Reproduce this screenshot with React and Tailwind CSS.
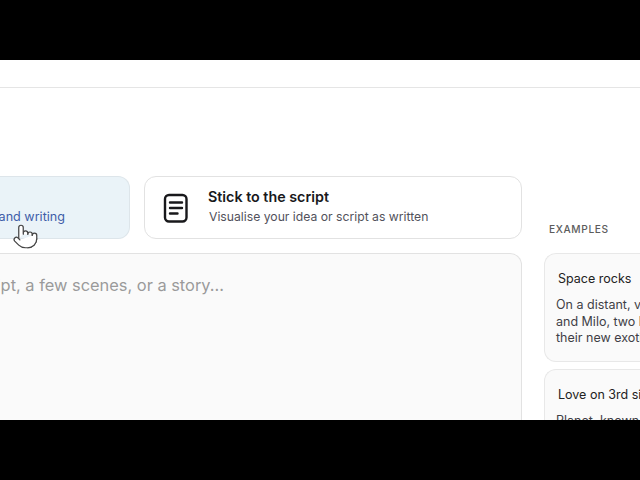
import { Pointer } from 'lucide-react'

function ScriptIcon() {
  return (
    <svg width="26" height="30" viewBox="0 0 26 30" fill="none" stroke="#18181b" strokeWidth="2.4" strokeLinecap="round" className="shrink-0">
      <rect x="2" y="2" width="21.5" height="26.5" rx="4" />
      <path d="M7 9.5h12M7 15h12M7 20.5h7.5" />
    </svg>
  )
}

function ExampleCard({ title, children }) {
  return (
    <div className="w-[130px] shrink-0 rounded-t-xl rounded-bl-xl border border-r-0 border-[#e8e8e8] bg-[#fafafa] pt-[15px] pb-[14px] pl-[11px] overflow-hidden">
      <div className="pl-[2px] text-[12.5px] leading-[20px] text-[#222] whitespace-nowrap">{title}</div>
      <div className="mt-[8px] text-[12.5px] leading-[16.5px] text-[#3f3f46] whitespace-nowrap">{children}</div>
    </div>
  )
}

export default function App() {
  return (
    <div className="w-[640px] h-[480px] flex flex-col bg-black overflow-hidden font-['Inter',sans-serif]">
      <div className="h-[60px] shrink-0" />
      <div className="h-[360px] shrink-0 bg-white overflow-hidden">
        <div className="h-[27px] border-b border-[#e5e5e5] box-content" />
        <div className="mt-[88px] flex">
          <div className="w-[522px] shrink-0">
            <div className="flex gap-[14px] h-[63px]">
              <div className="relative w-[130px] shrink-0 rounded-r-xl border border-l-0 border-[#dde5ea] bg-[#eaf3f8] flex items-end justify-end pr-[64px] pb-[13px]">
                <span className="text-[12.6px] leading-[16px] text-[#3f5ea8] whitespace-nowrap">and writing</span>
                <Pointer size={27} strokeWidth={1.1} fill="#fff" color="#444" className="absolute left-[12px] top-[46px]" />
              </div>
              <div className="flex-1 rounded-xl border border-[#e2e2e2] bg-white flex items-center pl-[18px]">
                <ScriptIcon />
                <div className="ml-[19px] -mt-[2px]">
                  <div className="text-[14.3px] leading-[20px] font-semibold text-[#18181b] whitespace-nowrap">Stick to the script</div>
                  <div className="mt-[1px] ml-[1px] text-[12.2px] leading-[18px] text-[#52525b] whitespace-nowrap">Visualise your idea or script as written</div>
                </div>
              </div>
            </div>
            <div className="mt-[14px] h-[200px] rounded-tr-xl border border-l-0 border-[#e2e2e2] bg-[#fafafa] flex justify-start pt-[19px]">
              <div className="w-[224px] flex justify-end overflow-hidden">
                <span className="text-[16.4px] leading-[24px] text-[#9a9a9a] whitespace-nowrap">Paste your script, a few scenes, or a story...</span>
              </div>
            </div>
          </div>
          <div className="ml-[22px] flex-1 min-w-0 mt-[46px]">
            <div className="ml-[5px] text-[10.2px] leading-[14px] tracking-[0.06em] font-medium text-[#5c5c5c]">EXAMPLES</div>
            <div className="mt-[17px] flex flex-col gap-[7px]">
              <ExampleCard title="Space rocks">
                On a distant, volcanic<br />and Milo, two hapless<br />their new exotic home
              </ExampleCard>
              <ExampleCard title="Love on 3rd site">
                Planet, known for
              </ExampleCard>
            </div>
          </div>
        </div>
      </div>
      <div className="flex-1" />
    </div>
  )
}
